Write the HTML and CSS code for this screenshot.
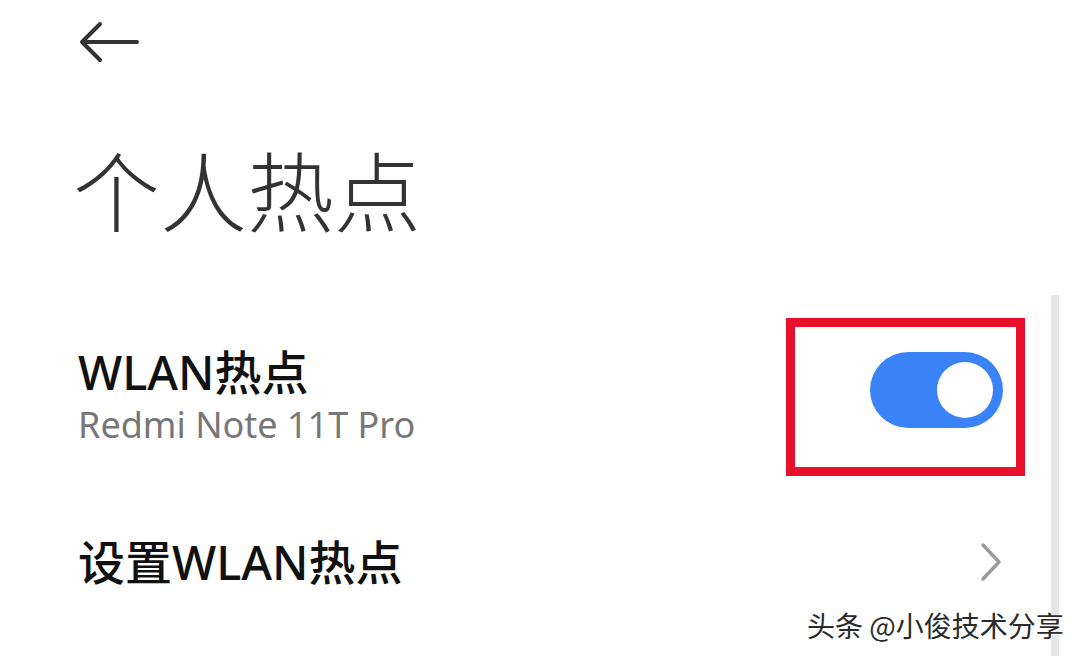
FILE: index.html
```html
<!DOCTYPE html>
<html lang="zh-CN">
<head>
    <meta charset="UTF-8">
    <meta name="viewport" content="width=device-width, initial-scale=1.0">
    <title>个人热点</title>
    <link rel="stylesheet" href="styles.css">
</head>
<body>
    <div class="page">
        <div class="topbar">
            <svg class="back" width="62" height="44" viewBox="0 0 62 44">
                <path d="M59 21H4M22 3L4 21L22 39" fill="none" stroke="#333" stroke-width="4" stroke-linecap="round" stroke-linejoin="round"/>
            </svg>
        </div>
        <h1 class="title">个人热点</h1>
        <div class="row row-hotspot">
            <div class="row-text">
                <div class="row-label">WLAN热点</div>
                <div class="row-sub">Redmi Note 11T Pro</div>
            </div>
            <div class="mark">
                <div class="toggle"><span class="knob"></span></div>
            </div>
        </div>
        <div class="row row-setup">
            <div class="row-label">设置WLAN热点</div>
            <svg class="chevron" width="22" height="40" viewBox="0 0 22 40">
                <path d="M3 3L19 20L3 37" fill="none" stroke="#9b9b9b" stroke-width="3.5" stroke-linecap="round" stroke-linejoin="round"/>
            </svg>
        </div>
    </div>
    <div class="scrollbar"></div>
    <div class="watermark">头条 @小俊技术分享</div>
</body>
</html>
```

FILE: styles.css
```css
body {
    margin: 0;
    padding: 0;
    background-color: #fff;
    font-family: "Noto Sans", "Noto Sans CJK SC", sans-serif;
    color: #000;
    width: 1080px;
    height: 656px;
    overflow: hidden;
    position: relative;
}
.page {
    padding-left: 78px;
}
.topbar {
    height: 88px;
    display: flex;
    align-items: center;
}
.back {
    display: block;
    margin-top: -2px;
}
.title {
    margin: 50px 0 0 -5px;
    font-family: "Noto Sans CJK SC", sans-serif;
    font-size: 87px;
    font-weight: 300;
    line-height: 100px;
    color: #333;
    height: 100px;
}
.row {
    display: flex;
    justify-content: space-between;
    align-items: center;
}
.row-hotspot {
    margin-top: 80px;
    padding-right: 55px;
}
.row-text {
    display: flex;
    flex-direction: column;
}
.row-label {
    font-family: "Noto Sans", "Noto Sans CJK SC", sans-serif;
    font-size: 47px;
    font-weight: 500;
    line-height: 56px;
    color: #111;
}
.row-sub {
    font-size: 36px;
    line-height: 50px;
    color: #777;
}
.mark {
    box-sizing: border-box;
    width: 239px;
    height: 158px;
    border: 9px solid #e8102a;
    display: flex;
    justify-content: flex-end;
    align-items: flex-start;
    padding: 25px 13px 0 0;
}
.toggle {
    width: 133px;
    height: 76px;
    border-radius: 38px;
    background-color: #3a83f6;
    position: relative;
}
.knob {
    position: absolute;
    right: 10px;
    top: 10px;
    width: 56px;
    height: 56px;
    border-radius: 50%;
    background-color: #fff;
}
.row-setup {
    margin-top: 58px;
    padding-right: 78px;
}
.chevron {
    display: block;
}
.scrollbar {
    position: absolute;
    left: 1051px;
    top: 295px;
    width: 8px;
    height: 361px;
    background-color: #e6e6e6;
}
.watermark {
    position: absolute;
    left: 807px;
    top: 606px;
    font-family: "Noto Sans CJK SC", sans-serif;
    font-size: 28px;
    line-height: 38px;
    color: #2a2a2a;
    text-shadow: 1px 1px 1px rgba(255, 255, 255, 0.9);
    white-space: nowrap;
}
```
